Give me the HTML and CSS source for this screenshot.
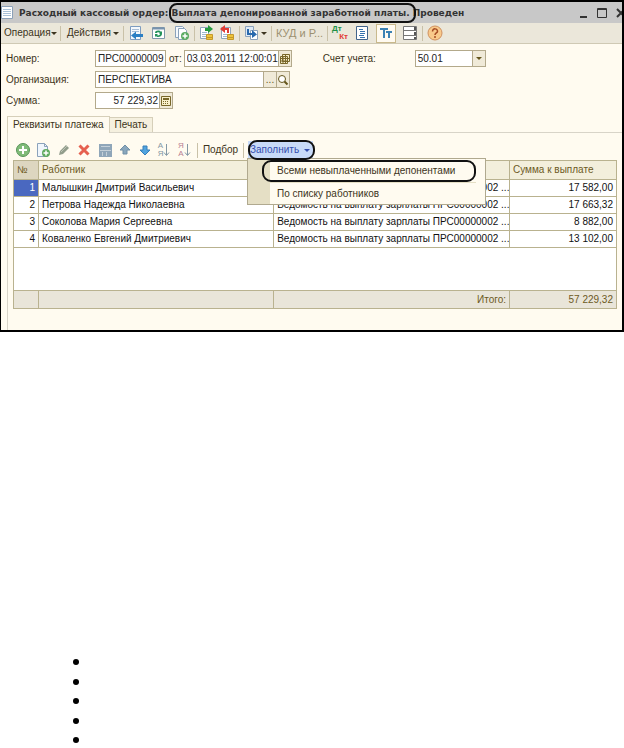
FILE: index.html
```html
<!DOCTYPE html>
<html lang="ru">
<head>
<meta charset="utf-8">
<title>Расходный кассовый ордер</title>
<link rel="stylesheet" href="styles.css">
</head>
<body>
<main class="window">
  <header class="titlebar">
    <svg class="doc" width="13" height="15" viewBox="0 0 13 15"><path fill="#fff" stroke="#8ba0b8" d="M.5 1.5h11v12H.5z"/><path stroke="#a9c1d8" d="M2 4.5h8M2 6.5h8M2 8.5h8M2 10.5h8"/></svg>
    <h1>Расходный кассовый ордер: <span class="marked">Выплата депонированной заработной платы.</span> Проведен</h1>
    <div class="controls">
      <button aria-label="Свернуть"><svg width="10" height="12"><path stroke="#333" stroke-width="2" d="M1 10h7"/></svg></button>
      <button aria-label="Развернуть"><svg width="11" height="12"><path fill="none" stroke="#333" d="M.5 1.5h9v9h-9zM0 2.500h10"/></svg></button>
      <button aria-label="Закрыть"><svg width="6" height="12"><path fill="none" stroke="#333" stroke-width="2" d="M1 2l8 8M9 2l-8 8"/></svg></button>
    </div>
  </header>

  <nav class="toolbar">
    <button class="menu-button">Операция<i class="caret"></i></button>
    <i class="sep"></i>
    <button class="menu-button">Действия<i class="caret"></i></button>
    <i class="sep"></i>
    <div class="group wide">
      <button aria-label="Перейти"><svg width="16" height="16"><path fill="#f4f8fc" stroke="#7d9cc0" d="M2.500 1.500h10v13h-10z"/><path stroke="#a8bdd6" d="M4 4.500h7M4 6.500h7"/><path fill="#2b7fc4" d="M3 10.500l5-4v2.500h7v3H8v2.500z"/></svg></button>
      <button aria-label="Обновить"><svg width="16" height="16"><path fill="#fff" stroke="#8198aa" d="M1.500 2.500h12v11h-12z"/><path stroke="#7793ae" stroke-width="2" d="M2 3.500h11"/><path fill="#25935a" d="M4 8c0-3 5-3 6-1l1-1v3H8l1-1c-1-1-3-1-3 0zM11 9c0 3-5 4-6 2l-1 1V9h3l-1 1c1 1 3 0 3-1z"/></svg></button>
      <button aria-label="Скопировать"><svg width="16" height="16"><path fill="#f5f9fd" stroke="#8ba2bb" d="M1.500 1.500h7l2 2v9h-9z"/><path fill="#fff" stroke="#8ba2bb" d="M4.500 3.500h6l2 2v9h-8z"/><circle cx="11" cy="11" r="4" fill="#5cab62"/><path stroke="#fff" stroke-width="1.500" d="M11 8.500v5M8.500 11h5"/></svg></button>
    </div>
    <i class="sep"></i>
    <div class="group">
      <button aria-label="Провести"><svg width="16" height="16"><path fill="#fff" stroke="#91a6bd" d="M1.500 2.500h8v11h-8z"/><path stroke="#9eb8d2" d="M3 7.500h5M3 9.500h5M3 11.500h5"/><path fill="#eec43a" stroke="#c4982b" d="M7.500 9.500h6v5h-6zM7.500 12.500h6"/><path fill="#269a3f" d="M6 3h3V0l5 4-5 4V6H6z"/></svg></button>
      <button aria-label="Отмена проведения"><svg width="16" height="16"><path fill="#fff" stroke="#91a6bd" d="M2.500 2.500h9v11h-9z"/><path stroke="#9eb8d2" d="M4 9.500h5M4 11.500h5"/><path fill="#eec43a" stroke="#c4982b" d="M8.500 9.500h6v5h-6zM8.500 12.500h6"/><path fill="#e03c35" d="M1 4l5-4v3h4v5H8V5H6v3z"/></svg></button>
    </div>
    <i class="sep"></i>
    <button class="icon-menu" aria-label="На основании"><svg width="16" height="16"><path fill="#dfeaf5" stroke="#8ca2bb" d="M1.500 1.500h8v10h-8z"/><path fill="#fff" stroke="#8ca2bb" d="M6.500 5.500h7v9h-7z"/><path fill="#2869ad" d="M3 4h2v4h3V5l5 4.500L8 13v-3H3z"/></svg><i class="caret"></i></button>
    <i class="sep"></i>
    <button class="muted">КУД и Р...</button>
    <i class="sep"></i>
    <div class="group mid">
      <button class="dtkt" aria-label="Дт Кт"><b>Дт</b><b>Кт</b></button>
      <button aria-label="Отчет"><svg width="16" height="16"><path fill="#fff" stroke="#42648b" d="M2.500 1.500h11v13h-11z"/><path stroke="#3773ad" d="M5 4.500h4M6 6.500h5M6 8.500h5M5 10.500h5M6 12.500h5"/></svg></button>
      <button class="pressed" aria-label="Текст"><svg width="16" height="16"><path fill="none" stroke="#3c82b4" stroke-width="2" d="M2 4h8M6 4v9M8 7h6M11 7v6"/></svg></button>
      <button aria-label="Список"><svg width="16" height="16"><path fill="#fff" stroke="#777" d="M1.500 1.500h13v13h-13zM1 5.500h14M1 10.500h14"/><path stroke="#555" stroke-width="2" d="M13 2v3M13 7v3M13 12v2"/></svg></button>
    </div>
    <i class="sep"></i>
    <button aria-label="Справка"><svg width="16" height="16"><circle cx="8" cy="8" r="7" fill="#f9c98a" stroke="#cf9160"/><path fill="none" stroke="#a64c24" stroke-width="1.500" d="M5.500 6.500c0-4 5.500-3 5 0-.3 1.500-2.500 1.500-2.500 3.500M8 11v2"/></svg></button>
  </nav>

  <form class="fields">
    <div class="row">
      <label for="num">Номер:</label>
      <div class="field num"><input id="num" value="ПРС00000009"></div>
      <label class="from" for="date">от:</label>
      <div class="field date"><input id="date" value="03.03.2011 12:00:01"><button type="button" aria-label="Календарь"><svg width="12" height="12"><path fill="#f6edc8" stroke="#78672a" d="M3.500 1.500h7v7h-7zM1.500 3.500h7v7h-7zM1 5.500h9M1 8h8M4 3v8M6.500 2v9"/></svg></button></div>
      <label class="account-label" for="acc">Счет учета:</label>
      <div class="field account"><select id="acc"><option>50.01</option></select><span class="drop"><i class="caret"></i></span></div>
    </div>
    <div class="row">
      <label for="org">Организация:</label>
      <div class="field org"><input id="org" value="ПЕРСПЕКТИВА"><button type="button">...</button><button type="button" aria-label="Открыть"><svg width="12" height="12"><circle cx="5" cy="5" r="3.500" fill="#fff" stroke="#65561d"/><path stroke="#65561d" stroke-width="2" d="M7.500 7.500l3 3"/></svg></button></div>
    </div>
    <div class="row">
      <label for="sum">Сумма:</label>
      <div class="field sum"><input id="sum" value="57 229,32"><button type="button" aria-label="Калькулятор"><svg width="12" height="12"><path fill="#f8efca" stroke="#78672a" d="M1.500 1.500h9v9h-9z"/><path stroke="#78672a" stroke-width="2" d="M3 4h6"/><path stroke="#78672a" stroke-dasharray="1 1" d="M3 6.500h6M3 8.500h6"/></svg></button></div>
    </div>
  </form>

  <div class="tabs" role="tablist">
    <button class="tab active" role="tab" aria-selected="true">Реквизиты платежа</button>
    <button class="tab" role="tab" aria-selected="false">Печать</button>
  </div>

  <section class="panel">
    <div class="commands">
      <div class="command-icons">
        <button aria-label="Добавить"><svg width="16" height="16"><circle cx="8" cy="8" r="6.500" fill="#80bb78" stroke="#579458"/><path stroke="#fff" stroke-width="2" d="M8 4v8M4 8h8"/></svg></button>
        <button aria-label="Скопировать строку"><svg width="16" height="16"><path fill="#f0f6fc" stroke="#8ba2bb" d="M2.500 1.500h7l3 3v10h-10z"/><path fill="none" stroke="#8ba2bb" d="M9.500 1.500v3h3"/><circle cx="11" cy="11" r="4" fill="#61ab60"/><path stroke="#fff" stroke-width="1.500" d="M11 8.500v5M8.500 11h5"/></svg></button>
        <button aria-label="Изменить"><svg width="16" height="16"><path fill="#929d8c" d="M3 13l1-4 6-6 3 3-6 6z"/><path stroke="#bdc5b7" d="M5 10l6-6"/></svg></button>
        <button aria-label="Удалить"><svg width="16" height="16"><path stroke="#e5604f" stroke-width="3" d="M3.500 3.500l9 9M12.500 3.500l-9 9"/></svg></button>
        <button aria-label="Сохранить"><svg width="16" height="16"><path fill="#8fa6b9" d="M2 2h13v13H2z"/><path stroke="#c4d0d9" d="M3 8.500h11M5.500 10v4M9.500 10v4M4 4.500h9"/></svg></button>
        <button aria-label="Вверх"><svg width="16" height="16"><path fill="#89a7bd" stroke="#7190a7" d="M8 3l5 5h-3v4H6V8H3z"/></svg></button>
        <button aria-label="Вниз"><svg width="16" height="16"><path fill="#51a4df" stroke="#377fba" d="M8 13l5-5h-3V4H6v4H3z"/></svg></button>
        <button class="sort" aria-label="По возрастанию"><span>А<br>Я</span><svg width="7" height="14"><path fill="none" stroke="#8398a5" d="M3.500 1v11M1 9.500l2.500 3L6 9.500"/></svg></button>
        <button class="sort desc" aria-label="По убыванию"><span>Я<br>А</span><svg width="7" height="14"><path fill="none" stroke="#8398a5" d="M3.500 1v11M1 9.500l2.500 3L6 9.500"/></svg></button>
      </div>
      <i class="sep"></i>
      <button class="pick">Подбор</button>
      <i class="sep"></i>
      <div class="fill-menu">
        <button class="fill">Заполнить<i class="caret"></i></button>
        <div class="menu">
          <button class="marked-item">Всеми невыплаченными депонентами</button>
          <button class="second-item">По списку работников</button>
        </div>
      </div>
    </div>

    <table>
      <colgroup><col class="c-num"><col class="c-name"><col class="c-doc"><col class="c-sum"></colgroup>
      <thead><tr><th class="current">№</th><th>Работник</th><th></th><th>Сумма к выплате</th></tr></thead>
      <tbody>
        <tr><td class="selected">1</td><td>Малышкин Дмитрий Васильевич</td><td>Ведомость на выплату зарплаты ПРС00000002 ...</td><td>17 582,00</td></tr>
        <tr><td>2</td><td>Петрова Надежда Николаевна</td><td>Ведомость на выплату зарплаты ПРС00000002 ...</td><td>17 663,32</td></tr>
        <tr><td>3</td><td>Соколова Мария Сергеевна</td><td>Ведомость на выплату зарплаты ПРС00000002 ...</td><td>8 882,00</td></tr>
        <tr><td>4</td><td>Коваленко Евгений Дмитриевич</td><td>Ведомость на выплату зарплаты ПРС00000002 ...</td><td>13 102,00</td></tr>
        <tr class="blank"><td colspan="4"></td></tr>
      </tbody>
      <tfoot><tr><td></td><td></td><td>Итого:</td><td>57 229,32</td></tr></tfoot>
    </table>
  </section>
</main>
<ul class="bullets"><li></li><li></li><li></li><li></li><li></li></ul>
</body>
</html>
```
FILE: styles.css
```css
* { box-sizing: border-box; }
body {
  margin: 0;
  background: #fff;
  color: #3c3420;
  font: 10px/14px "Liberation Sans", Arial, sans-serif;
}
button, input, select {
  margin: 0;
  padding: 0;
  border: 0;
  background: none;
  color: inherit;
  font: inherit;
  white-space: nowrap;
}
svg { display: block; flex: none; }
.window {
  border: solid #000;
  border-width: 2px 2px 2px 1px;
  background: #fffbf0;
  overflow: hidden;
}

/* Title */
.titlebar {
  display: flex;
  align-items: center;
  height: 21px;
  background: #c8c8c8;
}
.titlebar h1 {
  flex: 1;
  margin: 0 0 0 5px;
  color: #333;
  font: bold 9px/18px "DejaVu Sans", sans-serif;
  white-space: nowrap;
}
.marked { position: relative; }
.marked::after {
  content: "";
  position: absolute;
  inset: -5px -6px -5px -3px;
  border: 2px solid #111;
  border-radius: 8px;
}
.controls { display: flex; gap: 8px; }

/* Toolbars */
.caret {
  display: inline-block;
  border: solid transparent;
  border-width: 3px 3px 0;
  border-top-color: currentColor;
}
.sep { flex: none; width: 1px; height: 15px; background: #c9c1a8; }
.toolbar {
  display: flex;
  align-items: center;
  gap: 4px;
  height: 21px;
  padding-left: 1px;
  border-bottom: 1px solid #cfc9b4;
  background: #ebe7da;
}
.menu-button {
  display: flex;
  align-items: center;
  justify-content: space-between;
  width: 54px;
  padding: 0 0 0 2px;
}
.group { display: flex; align-items: center; gap: 4px; }
.group.wide { gap: 7px; }
.group.mid { gap: 6px; }
.icon-menu { display: flex; align-items: center; gap: 1px; }
.muted { width: 47px; color: #9c9070; font-size: 11px; text-align: left; }
.dtkt {
  display: flex;
  flex-direction: column;
  width: 16px;
  font-size: 8px;
  line-height: 8px;
}
.dtkt b:first-child { color: #1e9147; align-self: flex-start; }
.dtkt b:last-child { color: #e23b35; align-self: flex-end; }
.pressed {
  width: 20px;
  height: 19px;
  padding: 0 1px;
  border: 1px solid #c9b98c;
  background: #fffaf0;
}

/* Form */
.fields {
  display: grid;
  gap: 4px;
  padding: 6px 4px 7px 5px;
}
.row { display: flex; align-items: center; }
.row > label:first-child { width: 89px; }
.field {
  display: flex;
  height: 17px;
  border: 1px solid #b3a98b;
  background: #fff;
  color: #222;
}
.field input, .field select {
  flex: 1;
  min-width: 0;
  width: 0;
  padding-left: 2px;
  appearance: none;
}
.field button, .drop {
  display: flex;
  align-items: center;
  justify-content: center;
  width: 13px;
  border-left: 1px solid #b3a98b;
  background: #f0ead8;
  color: #65561d;
}
.num { width: 71px; }
.row .from { margin: 0 2px 0 3px; }
.date { width: 108px; }
.account-label { width: 92px; margin-left: 31px; }
.account { width: 71px; }
.drop { pointer-events: none; }
.org { width: 195px; }
.sum { width: 78px; }
.sum input { text-align: right; padding-right: 1px; }

/* Tabs */
.tabs { display: flex; align-items: flex-end; padding-left: 6px; }
.tab {
  height: 15px;
  padding: 0 5px;
  border: 1px solid #d6cfb9;
  border-width: 1px 1px 0 0;
  background: #f5f0df;
}
.tab.active {
  position: relative;
  height: 17px;
  margin-bottom: -1px;
  border-left-width: 1px;
  background: #fffbf0;
}
.panel {
  margin-left: 6px;
  padding: 7px 5px 21px;
  border: solid #d8d4c8;
  border-width: 1px 0 0 1px;
}

/* Table commands */
.commands { display: flex; align-items: center; height: 20px; }
.command-icons {
  display: flex;
  justify-content: space-between;
  width: 179px;
  margin: 0 3px 0 2px;
}
.sort {
  display: flex;
  align-items: center;
  width: 16px;
  color: #8398a5;
  font-size: 8px;
  line-height: 8px;
}
.desc { color: #b88193; }
.pick { width: 45px; }
.fill-menu { position: relative; margin-left: 4px; }
.fill {
  position: relative;
  display: flex;
  align-items: center;
  gap: 5px;
  height: 18px;
  padding: 0 3px 0 2px;
  background: #c8daf8;
  color: #344eae;
}
.fill::after {
  content: "";
  position: absolute;
  z-index: 3;
  inset: -1px -2px -1px 0;
  border: 2px solid #111;
  border-radius: 9px;
}
.menu {
  position: absolute;
  z-index: 2;
  top: 17px;
  left: -1px;
  width: 239px;
  padding: 1px 9px 0 14px;
  border: 1px solid #b0a98f;
  background: linear-gradient(to right, #e5dfc5 0 22px, #fffbf0 22px);
}
.menu button {
  display: block;
  width: 100%;
  text-align: left;
}
.menu .marked-item {
  height: 22px;
  padding-left: 13px;
  border: 2px solid #111;
  border-radius: 9px;
}
.menu .second-item {
  height: 22px;
  padding-left: 15px;
  border-top: 1px solid #e5dfc5;
}

/* Table */
table {
  width: 100%;
  border-collapse: collapse;
  table-layout: fixed;
  background: #fff;
  color: #111;
}
.c-num { width: 25px; }
.c-name { width: 39%; }
.c-sum { width: 107px; }
th, td {
  height: 17px;
  padding: 0 3px;
  border: 1px solid #b9b28f;
  text-align: left;
  white-space: nowrap;
  overflow: hidden;
}
th {
  height: 19px;
  background: #f3efdc;
  color: #6d5a24;
  font-weight: normal;
}
th.current { background: #ddd6c0; }
td:first-child, td:last-child { text-align: right; }
td.selected { background: #4a68c0; color: #fff; }
.blank td { height: 43px; }
tfoot td {
  height: 18px;
  background: #e9e5d9;
  color: #6d5a24;
  text-align: right;
}

/* List */
.bullets {
  display: flex;
  flex-direction: column;
  justify-content: space-between;
  height: 84px;
  margin: 327px 0 0 73px;
  padding: 0;
  list-style: none;
}
.bullets li {
  width: 6px;
  height: 6px;
  border-radius: 50%;
  background: #000;
}
```
